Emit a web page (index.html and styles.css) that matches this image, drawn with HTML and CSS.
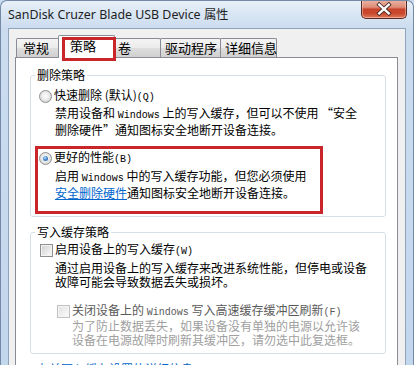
FILE: index.html
```html
<!DOCTYPE html>
<html lang="zh-CN">
<head>
<meta charset="utf-8">
<title>SanDisk Cruzer Blade USB Device 属性</title>
<link rel="stylesheet" href="styles.css">
</head>
<body>
<div class="window">
  <div class="titlebar">
    <span class="title">SanDisk Cruzer Blade USB Device 属性</span>
    <div class="close">
      <svg width="46" height="18" viewBox="0 0 46 18">
        <path d="M18 4.5 L28 13.5 M28 4.5 L18 13.5" stroke="#4a2a24" stroke-width="4.2" stroke-linecap="square" fill="none"/>
        <path d="M18 4.5 L28 13.5 M28 4.5 L18 13.5" stroke="#ffffff" stroke-width="2.4" stroke-linecap="square" fill="none"/>
      </svg>
    </div>
  </div>
  <div class="frame">
    <div class="dialog">
      <div class="tabs">
        <div class="tab t1">常规</div>
        <div class="tab sel">策略<span class="mark mark-tab"></span></div>
        <div class="tab t3">卷</div>
        <div class="tab t4">驱动程序</div>
        <div class="tab t5">详细信息</div>
      </div>
      <div class="panel">
        <fieldset class="group g1">
          <legend>删除策略</legend>
          <div class="opt o1"><span class="radio"></span><span>快速删除 (默认)<span class="en">(Q)</span></span></div>
          <div class="desc d1">禁用设备和 <span class="en">Windows</span> 上的写入缓存，但可以不使用 “安全<br>删除硬件”通知图标安全地断开设备连接。</div>
          <div class="block">
            <div class="opt"><span class="radio on"></span><span>更好的性能<span class="en">(B)</span></span></div>
            <div class="desc d2">启用 <span class="en">Windows</span> 中的写入缓存功能，但您必须使用<br><a class="link" href="#">安全删除硬件</a>通知图标安全地断开设备连接。</div>
            <span class="mark mark-opt"></span>
          </div>
        </fieldset>
        <fieldset class="group g2">
          <legend>写入缓存策略</legend>
          <div class="opt c1"><span class="check"></span><span>启用设备上的写入缓存<span class="en">(W)</span></span></div>
          <div class="desc d3">通过启用设备上的写入缓存来改进系统性能，但停电或设备<br>故障可能会导致数据丢失或损坏。</div>
          <div class="opt c2"><span class="check off"></span><span class="dim">关闭设备上的 <span class="en">Windows</span> 写入高速缓存缓冲区刷新<span class="en">(F)</span></span></div>
          <div class="desc d4">为了防止数据丢失，如果设备没有单独的电源以允许该<br>设备在电源故障时刷新其缓冲区，请勿选中此复选框。</div>
        </fieldset>
        <a class="link more" href="#">有关写入缓存设置的详细信息</a>
      </div>
    </div>
  </div>
</div>
</body>
</html>
```
FILE: styles.css
```css
* { box-sizing: border-box; }
html, body { margin: 0; padding: 0; }
body {
  width: 414px;
  height: 365px;
  overflow: hidden;
  font-family: "Noto Sans CJK SC", sans-serif;
  font-size: 12px;
  color: #000;
  background: #c8daef;
}
.window {
  width: 414px;
  height: 365px;
  display: flex;
  flex-direction: column;
  background: linear-gradient(180deg, #e8f0f9 0, #dae6f4 12px, #cbdcef 28px, #c2d6ec 100%);
  border: 1px solid #7389a6;
  border-bottom: none;
  border-radius: 7px 7px 0 0;
  overflow: hidden;
}
.titlebar {
  height: 27px;
  flex: none;
  display: flex;
  justify-content: space-between;
  align-items: flex-start;
  padding: 0 6px 0 7px;
}
.title {
  font-family: "Noto Sans", sans-serif;
  font-size: 12.4px;
  line-height: 16px;
  padding-top: 6px;
  color: #1e1e1e;
}
.close {
  width: 46px;
  height: 19px;
  margin-top: -1px;
  border: 1px solid #5a2b23;
  border-top: none;
  border-radius: 0 0 5px 5px;
  background: linear-gradient(180deg, #eab4a6 0, #df8b76 40%, #c8432a 52%, #c94a2f 75%, #e27b5c 100%);
  box-shadow: inset 0 0 0 1px rgba(255,220,210,0.45);
  display: flex;
  align-items: center;
  justify-content: center;
}
.close svg { display: block; }
.frame {
  flex: 1;
  display: flex;
  padding: 0 7px;
}
.dialog {
  flex: 1;
  display: flex;
  flex-direction: column;
  background: #f0f0f0;
  border: 1px solid #8fa3bb;
  border-bottom: none;
  padding: 6px 7px 0 6px;
}
.tabs {
  display: flex;
  align-items: flex-end;
  height: 22px;
  flex: none;
  padding-left: 1px;
}
.tab {
  height: 19px;
  border: 1px solid #898c95;
  border-bottom: none;
  border-radius: 2px 2px 0 0;
  margin-right: -1px;
  background: linear-gradient(180deg, #f4f4f4 0, #ebebeb 50%, #dedede 50%, #d0d0d0 100%);
  padding: 1px 0 0 6px;
  font-size: 13px;
  line-height: 16px;
  white-space: nowrap;
}
.t1 { width: 45px; }
.t3 { width: 48px; padding-left: 4px; }
.t4 { width: 61px; padding-left: 4px; }
.t5 { width: 57px; padding-left: 4px; }
.tab.sel {
  width: 57px;
  height: 23px;
  margin: 0 -2px -1px -2px;
  background: #fff;
  position: relative;
  z-index: 2;
  padding: 2px 0 0 11px;
}
.mark {
  position: absolute;
  border: 3px solid #c8262b;
  z-index: 3;
  pointer-events: none;
}
.mark-tab { left: 3px; top: 1px; width: 54px; height: 24px; }
.panel {
  flex: 1;
  background: #fff;
  border: 1px solid #898c95;
  padding: 0 11px 0 14px;
}
.group {
  margin: 10px 0 0 0;
  border: 1px solid #d5dfe5;
  border-radius: 3px;
  padding: 0 0 16px 0;
  min-width: 0;
}
.group legend {
  padding: 0 2px;
  margin-left: 4px;
  font-size: 12px;
  line-height: 14px;
}
.g2 { margin-top: 8px; padding-bottom: 6px; }
.opt {
  display: flex;
  align-items: center;
  height: 16px;
  margin-left: 8px;
  line-height: 16px;
  white-space: nowrap;
}
.o1 { margin-top: 6px; }
.desc {
  margin-left: 24px;
  line-height: 14px;
  white-space: nowrap;
}
.d1 { margin-top: 2px; }
.block {
  position: relative;
  margin-top: 13px;
}
.d2 { margin-top: 3px; }
.mark-opt { left: 4px; top: -4px; width: 288px; height: 68px; }
.en {
  font-family: "Liberation Mono", monospace;
  font-size: 10px;
}
.radio {
  width: 13px;
  height: 13px;
  flex: none;
  border-radius: 50%;
  border: 1px solid #8e8f8f;
  background: radial-gradient(circle at 50% 45%, #fbfbfb 0, #f0f0f0 35%, #d4d4d4 80%, #c8c8c8 100%);
  margin-right: 2px;
  position: relative;
}
.radio.on::after {
  content: "";
  position: absolute;
  left: 3px;
  top: 3px;
  width: 5px;
  height: 5px;
  border-radius: 50%;
  background: radial-gradient(circle at 40% 35%, #b9dcfb 0, #4d8fd1 45%, #1b4f8f 100%);
}
.check {
  width: 13px;
  height: 13px;
  flex: none;
  border: 1px solid #8e8f8f;
  background: linear-gradient(135deg, #cfcfcf 0, #e8e8e8 55%, #fbfbfb 100%);
  box-shadow: inset 0 0 0 1px #f4f4f4;
  margin-right: 2px;
}
.check.off {
  border-color: #c2c2c2;
  background: linear-gradient(135deg, #e2e2e2 0, #efefef 55%, #fdfdfd 100%);
}
.c1 { margin-top: 3px; margin-left: 9px; }
.d3 { margin-top: 3px; }
.c2 { margin-top: 14px; margin-left: 26px; }
.dim { color: #5a5a5a; }
.d4 { margin-left: 41px; color: #a0a0a0; }
.link {
  color: #0066cc;
  text-decoration: underline;
}
.more {
  display: block;
  margin: 8px 0 0 7px;
  line-height: 14px;
  text-decoration: none;
}
```
